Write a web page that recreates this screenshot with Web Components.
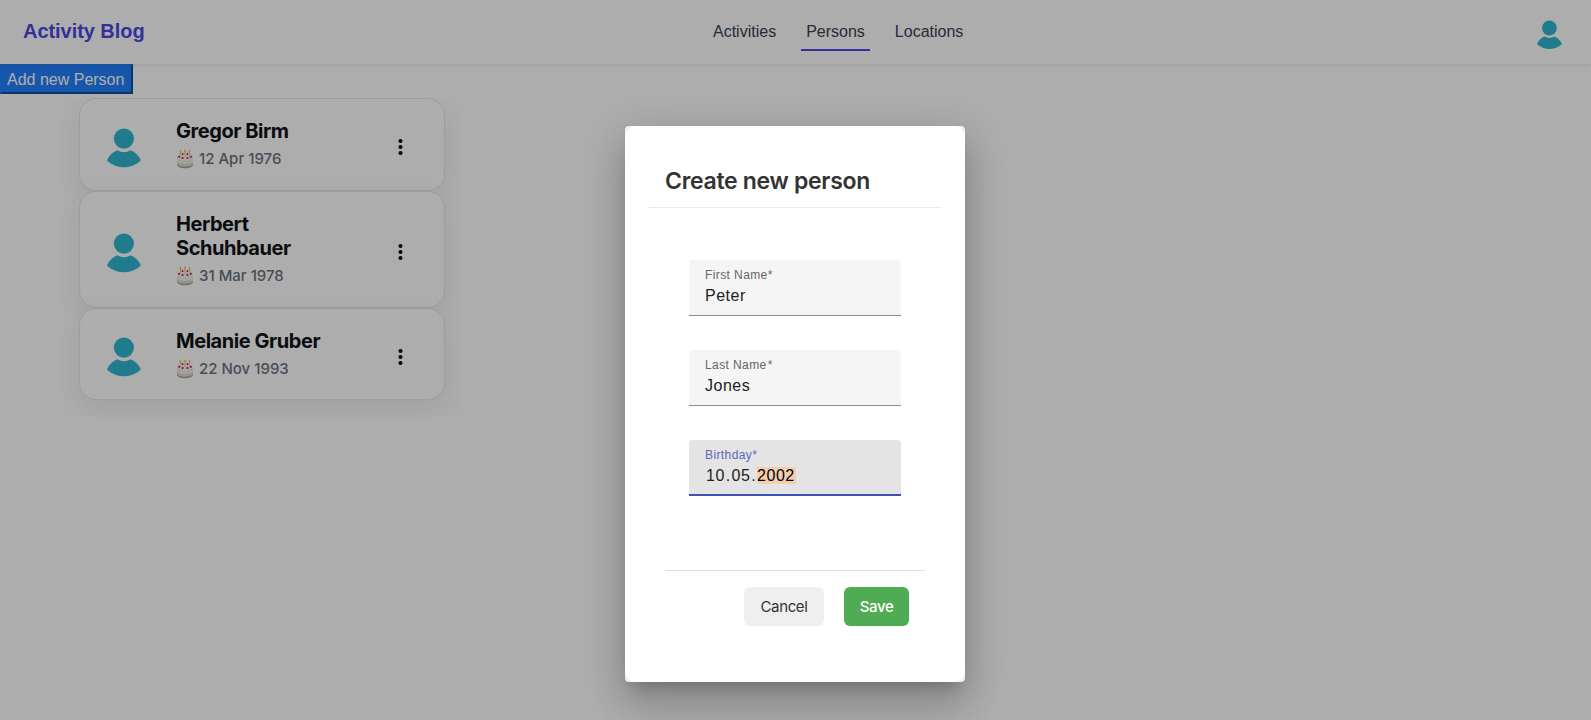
<!DOCTYPE html>
<html lang="en"><head><meta charset="utf-8"><title>Activity Blog</title>
<style>html,body{margin:0;height:100%;overflow:hidden;background:#fff;font-family:"Liberation Sans",Arial,sans-serif}</style></head>
<body><activity-app></activity-app>
<script>
function define(name, html) {
  const t = document.createElement('template');
  t.innerHTML = html;
  customElements.define(name, class extends HTMLElement {
    constructor() {
      super();
      this.attachShadow({mode: 'open'}).append(t.content.cloneNode(true));
    }
  });
}

define('user-avatar', `<style>:host{display:block;width:34px;height:39px}svg{display:block;width:100%;height:100%;overflow:visible}</style>
<svg viewBox="0 0 34 39" fill="#30b7cf"><circle cx="16.900" cy="10.600" r="10.100"/><path d="M10.200 22.300Q16.900 26.300 23.600 22.300Q29.800 24.700 33.200 31C33.800 32.100 33.600 32.800 32.800 33.500C24 41.200 9.800 41.200 1 33.500C.2 32.800 0 32.100 .6 31Q4 24.700 10.200 22.300Z"/></svg>`);

define('cake-icon', `<style>:host{display:block;width:18px;height:20px}svg{display:block}</style>
<svg width="18" height="20" viewBox="0 0 18 20"><path d="M1 9v6c0 2.3 3.600 4 8 4s8-1.700 8-4V9z" fill="#dedbd3"/><path d="M1 14.300v1.500C1 17.700 4.600 19.300 9 19.300s8-1.600 8-3.500v-1.500c0 2-3.600 3.400-8 3.400s-8-1.400-8-3.400z" fill="#aaa59a"/><ellipse cx="9" cy="8" rx="8" ry="4.200" fill="#f5f3ee"/><path d="M1 8.500c0 5.800 16 5.800 16 0v2.500c0 5-16 5-16 0z" fill="#f5f3ee"/><g stroke="#e8cf9a" stroke-width="1.300"><path d="M4.500 3v3.500M9 2.500v5M13.500 3v3.500"/></g><g fill="#b8224b"><circle cx="6.600" cy="5" r=".9"/><circle cx="11.400" cy="5" r=".9"/><circle cx="3.200" cy="7.800" r="1.100"/><circle cx="14.800" cy="7.800" r="1.100"/><circle cx="6.600" cy="9" r="1.100"/><circle cx="11.400" cy="9" r="1.100"/></g><g fill="#f2c33c"><ellipse cx="4.500" cy="2.400" rx=".8" ry="1.400"/><ellipse cx="9" cy="2" rx=".8" ry="1.400"/><ellipse cx="13.500" cy="2.400" rx=".8" ry="1.400"/></g></svg>`);

define('nav-link', `<style>:host{display:flex;align-items:center;box-sizing:border-box;height:36px;padding:0 5px;border-bottom:2px solid transparent;font-size:16px;line-height:24px;color:#374151;white-space:nowrap}:host([active]){border-color:#4f46e5}</style><slot></slot>`);

define('nav-bar', `<style>
:host{display:grid;grid-template-columns:685px auto 1fr;align-items:center;height:64px;box-sizing:border-box;padding:0 29.500px 0 23px;background:#fff;box-shadow:0 1px 3px rgba(0,0,0,.05),0 4px 6px rgba(0,0,0,.03);position:relative}
b{font-size:20px;line-height:28px;color:#4f46e5;padding-bottom:2px;letter-spacing:-.05px}
nav{display:flex;gap:20px;padding-top:14px;height:37px;margin-bottom:12px;align-items:flex-start}
user-avatar{justify-self:end;width:25px;height:29px;margin-top:5px}
</style><b>Activity Blog</b><nav><nav-link>Activities</nav-link><nav-link active>Persons</nav-link><nav-link>Locations</nav-link></nav><user-avatar></user-avatar>`);

define('add-button', `<style>:host{display:block;height:34px}button{display:block;font:16px/24px "Liberation Sans",sans-serif;width:133px;height:30px;padding:1px 0 0 5px;text-align:left;color:#fff;background:#2381fd;border:2px solid;border-color:#2381fd #0d4f9e #0d4f9e #2381fd;white-space:nowrap}</style><button><slot></slot></button>`);

define('person-card', `<style>
:host{display:flex;box-sizing:border-box;width:366px;height:93px;border:1px solid #e6e7ea;border-radius:17px;background:#fff;box-shadow:0 10px 30px rgba(0,0,0,.08);padding:0 41.500px 0 27px}
user-avatar{align-self:center;margin-top:5px;margin-right:35px;flex:none}
.info{flex:1;padding-top:20px;font-family:Inter,sans-serif}
.name{font-size:20px;line-height:24px;font-weight:700;letter-spacing:-.45px;color:#101418;width:150px}
.date{display:flex;align-items:center;gap:5px;font-size:15px;line-height:24px;font-weight:500;color:#6b7280;margin-top:4px;white-space:nowrap}
.dots{align-self:center;margin-top:5px;width:5px;height:18px;flex:none}
svg{display:block}
</style><user-avatar></user-avatar><div class="info"><div class="name"><slot></slot></div><div class="date"><cake-icon></cake-icon><span><slot name="date"></slot></span></div></div>
<svg class="dots" viewBox="0 0 5 18" fill="#0a0a0a"><circle cx="2.500" cy="3" r="2.050"/><circle cx="2.500" cy="9" r="2.050"/><circle cx="2.500" cy="15" r="2.050"/></svg>`);

define('person-list', `<style>:host{display:flex;flex-direction:column;padding:0 17px 17px;margin-left:62px;width:366px;overflow:hidden}.tall{height:117px}person-card:last-child{height:92px}</style>
<person-card><span>Gregor Birm</span><span slot="date">12 Apr 1976</span></person-card>
<person-card class="tall"><span>Herbert Schuhbauer</span><span slot="date">31 Mar 1978</span></person-card>
<person-card><span>Melanie Gruber</span><span slot="date">22 Nov 1993</span></person-card>`);

define('form-field', `<style>
:host{display:block;box-sizing:border-box;width:212px;height:56px;padding:8px 16px 0;border-radius:4px 4px 0 0;background:#f5f5f5;border-bottom:1px solid #8c8c8c}
:host([focused]){background:#e4e4e4;border-bottom:2px solid #3f51b5}
.l{font-size:12px;line-height:14px;letter-spacing:.4px;color:#666;white-space:nowrap}
:host([focused]) .l{color:#5767c0}
.v{font-size:16px;line-height:18px;letter-spacing:.5px;color:#212121;margin-top:5px;white-space:nowrap}
</style><div class="l"><slot name="label"></slot></div><div class="v"><slot></slot></div>`);

define('date-value', `<style>:host{display:flex;align-items:flex-start;padding-left:1px}.d{padding-right:1px}.p{padding-right:.8px}mark{background:#f4ceb0;color:#000;height:17px;line-height:18px;padding:0 1px 0 0}</style><span class="d">10</span><span class="p">.</span><span class="d">05</span><span class="p">.</span><mark>2002</mark>`);

define('dialog-button', `<style>:host{display:block}button{display:block;border:0;border-radius:6px;width:80px;height:39px;padding:0;background:#efefef;color:#333;font:400 15px/39px Inter,sans-serif;letter-spacing:-.35px}:host([primary]) button{width:65px;background:#50ac54;color:#fff;font-weight:500}</style><button><slot></slot></button>`);

define('person-dialog', `<style>
:host{display:block;width:340px;height:556px;border-radius:4px;background:#f0f0f0;box-shadow:0 11px 15px -7px rgba(0,0,0,.2),0 24px 38px 3px rgba(0,0,0,.14),0 9px 46px 8px rgba(0,0,0,.12)}
.in{display:flex;flex-direction:column;box-sizing:border-box;height:556px;border-radius:11px;background:#fff;padding:36px 24px 0}
h2{margin:0;padding:0 16px;height:45px;border-bottom:1px solid #e9e9e9;font:600 23px/38px Inter,sans-serif;letter-spacing:-.3px;color:#333;white-space:nowrap}
form{display:flex;flex-direction:column;align-items:center;gap:34px;padding-top:52px}
footer{display:flex;justify-content:flex-end;gap:20px;margin:74px 16px 0;padding:16px 16px 0;border-top:1px solid #dfdfe8}
</style><div class="in"><h2>Create new person</h2><form>
<form-field><span slot="label">First Name<span>*</span></span>Peter</form-field>
<form-field><span slot="label">Last Name<span style="padding-left:1px">*</span></span>Jones</form-field>
<form-field focused><span slot="label">Birthday<span>*</span></span><date-value></date-value></form-field>
</form><footer><dialog-button>Cancel</dialog-button><dialog-button primary>Save</dialog-button></footer></div>`);

define('modal-layer', `<style>:host{position:fixed;inset:0;display:flex;justify-content:center;align-items:flex-start;padding:126px 1px 0 0;box-sizing:border-box;background:rgba(0,0,0,.32)}</style><slot></slot>`);

define('activity-app', `<style>:host{display:block;height:720px}</style><nav-bar></nav-bar><add-button>Add new Person</add-button><person-list></person-list><modal-layer><person-dialog></person-dialog></modal-layer>`);
</script></body></html>
